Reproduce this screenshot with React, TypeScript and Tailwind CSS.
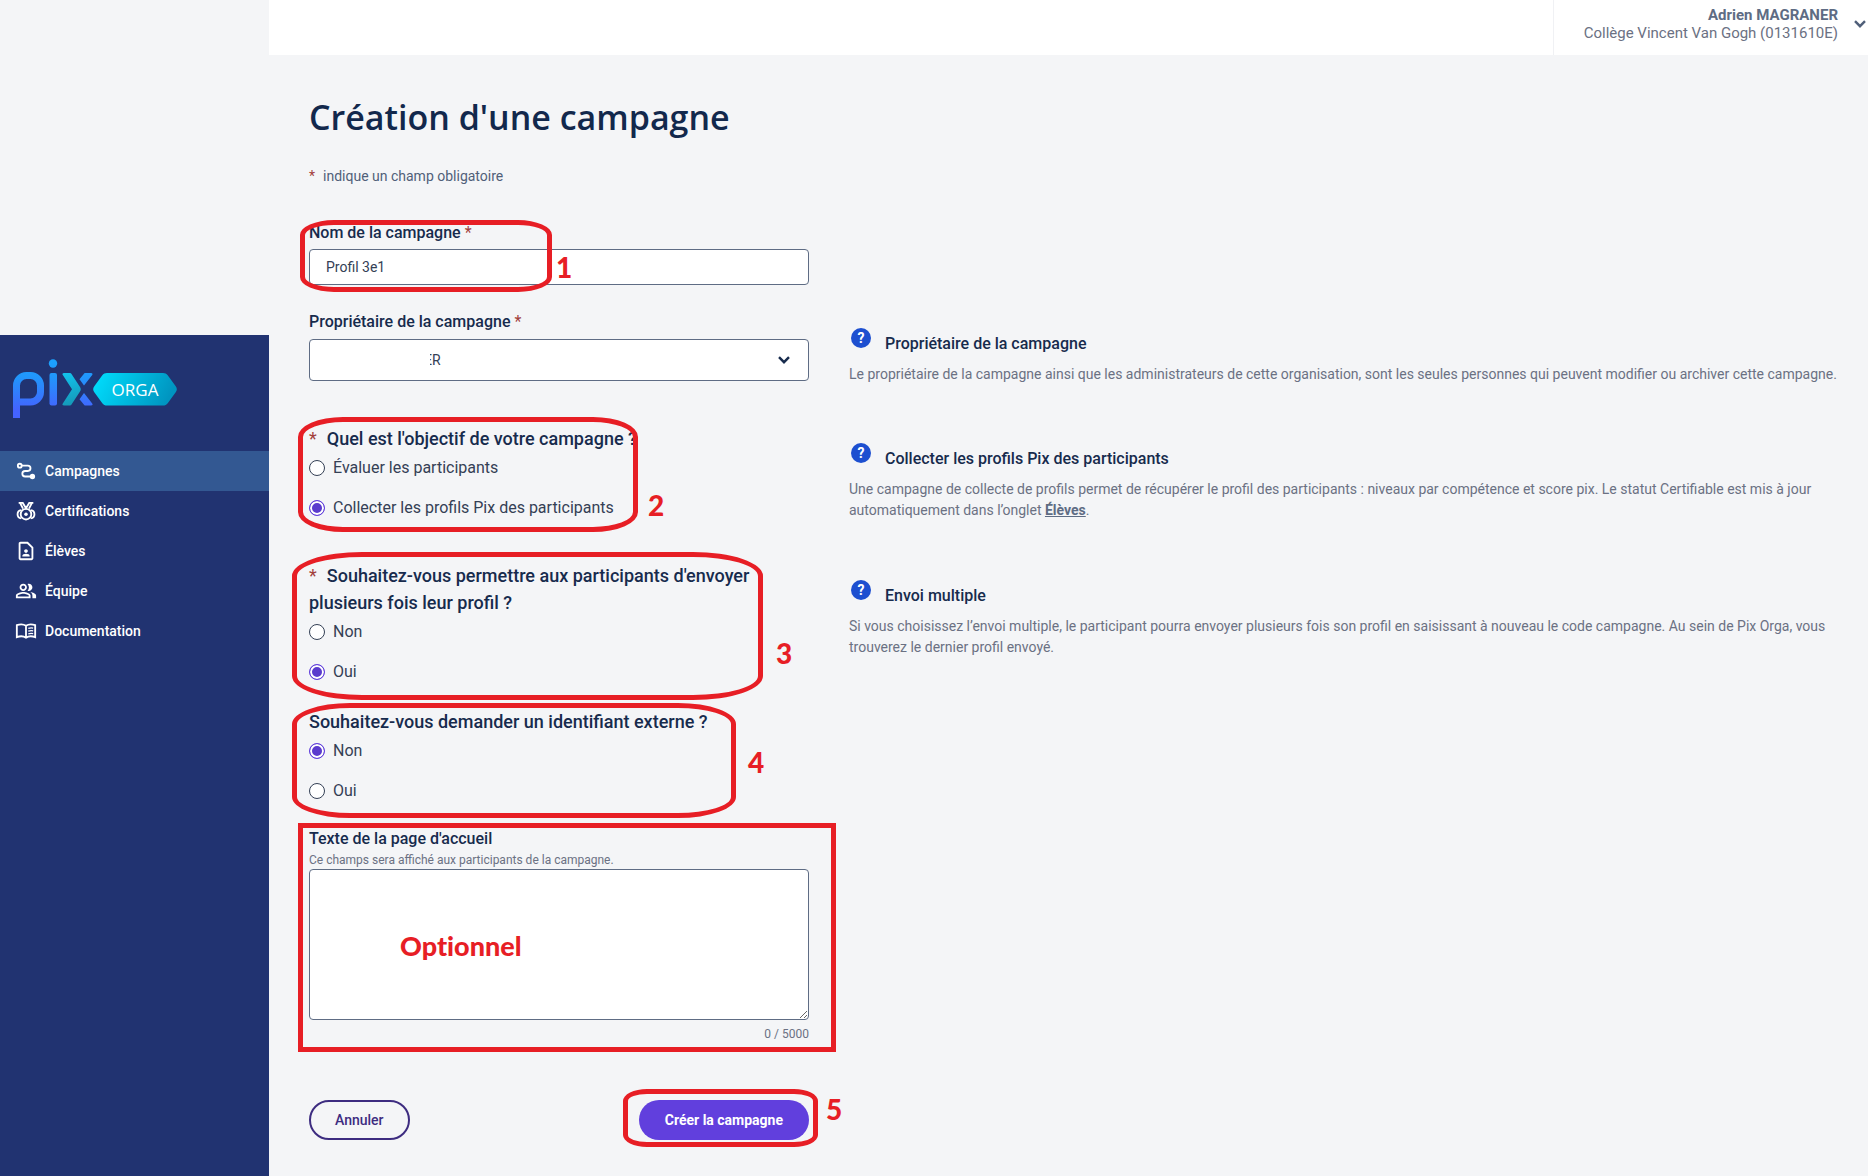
import React, { useState } from "react";
import { MdOutlineContactPage, MdOutlinePeopleAlt } from "react-icons/md";

function RouteIcon() {
  return (
    <svg viewBox="0 0 24 24" className="size-[22px]" fill="none" stroke="currentColor" strokeWidth="2" aria-hidden="true">
      <circle cx="5.2" cy="6.2" r="2.1" />
      <path d="M7.500 6.200H14a2.900 2.900 0 0 1 0 5.800h-3a3 3 0 0 0 0 6h6" />
      <circle cx="19" cy="18" r="2.9" fill="currentColor" stroke="none" />
    </svg>
  );
}

function MedalIcon() {
  return (
    <svg viewBox="0 0 24 24" className="size-[22px]" fill="none" stroke="currentColor" strokeWidth="2" aria-hidden="true">
      <path d="M4 3.200h4.500L12 9l3.500-5.800H20M5.500 3.200L8.700 9.500M18.500 3.200l-3.200 6.300" />
      <circle cx="12" cy="15.500" r="5.800" />
      <path d="M6.800 11C4 11.300 2.800 13 2.800 15.500S4 19.700 6.800 20M17.200 11c2.800.3 4 2 4 4.500s-1.200 4.200-4 4.500" />
      <circle cx="12" cy="15.500" r="1.900" fill="currentColor" stroke="none" />
    </svg>
  );
}

function BookIcon() {
  return (
    <svg viewBox="0 0 24 24" className="size-[22px]" fill="none" stroke="currentColor" strokeWidth="2" aria-hidden="true">
      <path d="M12 6.300C9.500 4.600 5.500 4.400 2 5.700v13c3.500-1.300 7.500-1.100 10 .6 2.500-1.700 6.500-1.900 10-.6v-13c-3.500-1.300-7.500-1.100-10 .6zM12 6.300v13" />
      <path d="M14.500 9.200c1.800-.6 3.600-.7 5.300-.3M14.500 12.200c1.800-.6 3.600-.7 5.300-.3M14.500 15.200c1.800-.6 3.600-.7 5.300-.3" strokeWidth="1.400" />
    </svg>
  );
}

function Logo() {
  return (
    <svg viewBox="0 0 166 60" className="h-[60px] w-[166px]" role="img" aria-label="Pix Orga">
      <defs>
        <linearGradient id="pix" x1="0" y1="0" x2="0" y2="60" gradientUnits="userSpaceOnUse">
          <stop offset="0" stopColor="#1aa3ff" />
          <stop offset="0.3" stopColor="#2196fb" />
          <stop offset="0.85" stopColor="#4463ff" />
        </linearGradient>
        <linearGradient id="chevron" x1="50" y1="14" x2="60" y2="47" gradientUnits="userSpaceOnUse">
          <stop offset="0" stopColor="#12c4ee" />
          <stop offset="1" stopColor="#1597b6" />
        </linearGradient>
        <linearGradient id="badge" x1="80" y1="14" x2="150" y2="50" gradientUnits="userSpaceOnUse">
          <stop offset="0" stopColor="#00e0ff" />
          <stop offset="1" stopColor="#0095c0" />
        </linearGradient>
      </defs>
      <path d="M3.500 59V26.500a10 10 0 0 1 10-10h4a10 10 0 0 1 10 10v6.500a10 10 0 0 1-10 10H3.500" fill="none" stroke="url(#pix)" strokeWidth="7" />
      <circle cx="40" cy="4.500" r="4.200" fill="url(#pix)" />
      <rect x="36.500" y="14" width="7.500" height="32.500" rx="2" fill="url(#pix)" />
      <path d="M72 14h6c1.500 0 2 1 1.200 2L71 26.500l-4.500-6.200 4.300-5.300c.4-.6.700-1 1.200-1zM72 46.500h6c1.500 0 2-1 1.200-2L71 34l-4.500 6.200 4.300 5.300c.4.600.7 1 1.200 1z" fill="url(#pix)" />
      <path d="M51 14h5.500c1 0 1.500.3 2 1L67 28c1 1.500 1 3 0 4.500l-8.500 13c-.5.7-1 1-2 1H51c-1.500 0-2-1-1.200-2L59 30.300 49.800 16c-.8-1-.3-2 1.200-2z" fill="url(#chevron)" />
      <path d="M94 14h56c2 0 3.500.7 4.700 2.300l8 11c1.500 2 1.500 3.900 0 5.900l-8 11c-1.200 1.600-2.700 2.300-4.700 2.300H94c-2 0-3.500-.7-4.700-2.300l-8-11c-1.500-2-1.500-3.900 0-5.900l8-11C90.500 14.700 92 14 94 14z" fill="url(#badge)" />
      <text x="122" y="36.500" textAnchor="middle" className="fill-white font-['Open_Sans'] text-[17px] font-medium">ORGA</text>
    </svg>
  );
}

const navItems = [
  { label: "Campagnes", icon: <RouteIcon />, active: true },
  { label: "Certifications", icon: <MedalIcon />, active: false },
  { label: "Élèves", icon: <MdOutlineContactPage className="size-[22px]" />, active: false },
  { label: "Équipe", icon: <MdOutlinePeopleAlt className="size-[22px]" />, active: false },
  { label: "Documentation", icon: <BookIcon />, active: false },
];

function Chevron({ className }: { className: string }) {
  return (
    <svg viewBox="0 0 12 8" className={className} fill="none" stroke="currentColor" strokeWidth="2.4" aria-hidden="true">
      <path d="M1 1.200l5 5 5-5" />
    </svg>
  );
}

function Mark({ shape, number, numberAt }: { shape: string; number?: string; numberAt?: string }) {
  return (
    <>
      <span className={`pointer-events-none absolute border-[5px] border-[#e71e25] ${shape}`} />
      {number && (
        <span className={`pointer-events-none absolute font-['Lato'] text-[28px] leading-7 font-black text-[#e71e25] ${numberAt}`}>{number}</span>
      )}
    </>
  );
}

function Star() {
  return <span className="font-normal text-[#a2403c]">*</span>;
}

function Help({ title, children }: { title: string; children: React.ReactNode }) {
  return (
    <aside className="pt-4">
      <div className="flex gap-3">
        <span className="flex size-6 shrink-0 items-center justify-center" aria-hidden="true">
          <span className="flex size-5 items-center justify-center rounded-full bg-[#1d4fd0] text-sm font-bold text-white">?</span>
        </span>
        <h2 className="pt-1.5 text-base leading-6 font-medium text-[#172b4d]">{title}</h2>
      </div>
      <p className="mt-2 text-sm leading-[21px] text-[#6b7183]">{children}</p>
    </aside>
  );
}

function Choice({ name, legend, required, options, selected }: { name: string; legend: string; required?: boolean; options: string[]; selected: number }) {
  return (
    <fieldset>
      <legend className="text-lg leading-[27px] font-medium text-[#172b4d]">
        {required && <span className="mr-2.5"><Star /></span>}
        {legend}
      </legend>
      <div className="mt-1 flex flex-col gap-4">
        {options.map((o, i) => (
          <label key={o} className="flex items-center gap-2 text-base leading-6 text-[#344055]">
            <input
              type="radio"
              name={name}
              defaultChecked={i === selected}
              className="size-4 appearance-none rounded-full border border-[#344055] bg-white checked:border-[#613fdd] checked:bg-[#5a3bcd] checked:shadow-[inset_0_0_0_2px_white]"
            />
            {o}
          </label>
        ))}
      </div>
    </fieldset>
  );
}

const row = "relative grid grid-cols-[500px_1fr] gap-x-10";
const fieldLabel = "block text-base leading-6 font-medium text-[#172b4d]";

export default function App() {
  const [text, setText] = useState("");
  return (
    <div className="flex min-h-screen bg-[#f4f5f7] font-['Roboto',sans-serif]">
      <aside className="flex w-[269px] shrink-0 flex-col pt-[335px]">
        <div className="flex-1 bg-[#213371]">
          <div className="h-[116px] pt-6 pl-[13px]">
            <Logo />
          </div>
          <nav>
            {navItems.map((n) => (
              <a key={n.label} href="#" className={`flex h-10 items-center gap-2 pl-[15px] text-sm font-medium text-white ${n.active ? "bg-[#335892]" : ""}`}>
                {n.icon}
                {n.label}
              </a>
            ))}
          </nav>
        </div>
      </aside>

      <div className="flex min-w-0 flex-1 flex-col">
        <header className="flex h-[55px] justify-end bg-white">
          <button type="button" className="flex items-start gap-4 border-l border-[#f0f1f4] pt-1.5 pr-0.5 pl-[30px] text-right text-[15px] leading-[18px] text-[#6b7183]">
            <span>
              <span className="block font-bold text-[#5e6c84]">Adrien MAGRANER</span>
              <span className="block">Collège Vincent Van Gogh (0131610E)</span>
            </span>
            <Chevron className="mt-3.5 w-3 text-[#505f79]" />
          </button>
        </header>

        <main className="px-10 pt-10 pr-7 pb-9">
          <h1 className="font-['Open_Sans'] text-[34px] leading-11 font-semibold text-[#12284c]">Création d'une campagne</h1>
          <p className="mt-[25px] text-sm leading-6 text-[#505f79]">
            <span className="mr-2"><Star /></span>indique un champ obligatoire
          </p>

          <form className="mt-[33px]" onSubmit={(e) => e.preventDefault()}>
            <div className={row}>
              <div>
                <label htmlFor="name" className={fieldLabel}>Nom de la campagne <Star /></label>
                <input id="name" defaultValue="Profil 3e1" className="mt-1 h-9 w-full rounded border border-[#5e6c84] bg-white px-4 text-sm text-[#344055]" />
              </div>
              <Mark shape="-left-[9px] -top-px h-[72px] w-[252px] rounded-[34px/15px]" number="1" numberAt="left-[247px] top-8" />
            </div>

            <div className={`${row} mt-[25px]`}>
              <div>
                <label htmlFor="owner" className={fieldLabel}>Propriétaire de la campagne <Star /></label>
                <div className="relative mt-[5px]">
                  <select id="owner" className="h-[42px] w-full appearance-none rounded border border-[#5e6c84] bg-white pl-[114px] text-sm text-[#344055]">
                    <option>ER</option>
                  </select>
                  <span className="pointer-events-none absolute top-3 left-[110px] h-4 w-[11px] bg-white" />
                  <span className="pointer-events-none absolute top-[17px] right-[19px] text-[#172b4d]"><Chevron className="w-3" /></span>
                </div>
              </div>
              <Help title="Propriétaire de la campagne">
                Le propriétaire de la campagne ainsi que les administrateurs de cette organisation, sont les seules personnes qui peuvent modifier ou archiver cette campagne.
              </Help>
            </div>

            <div className={`${row} mt-10`}>
              <Choice name="goal" required legend="Quel est l'objectif de votre campagne ?" options={["Évaluer les participants", "Collecter les profils Pix des participants"]} selected={1} />
              <Help title="Collecter les profils Pix des participants">
                Une campagne de collecte de profils permet de récupérer le profil des participants : niveaux par compétence et score pix. Le statut Certifiable est mis à jour automatiquement dans l’onglet <a href="#" className="font-bold text-[#5e6c84] underline">Élèves</a>.
              </Help>
              <Mark shape="-left-[11px] -top-2 h-[115px] w-[340px] rounded-[45px/20px]" number="2" numberAt="left-[339px] top-[66px]" />
            </div>

            <div className={`${row} mt-[41px]`}>
              <Choice name="multiple" required legend="Souhaitez-vous permettre aux participants d'envoyer plusieurs fois leur profil ?" options={["Non", "Oui"]} selected={1} />
              <Help title="Envoi multiple">
                Si vous choisissez l’envoi multiple, le participant pourra envoyer plusieurs fois son profil en saisissant à nouveau le code campagne. Au sein de Pix Orga, vous trouverez le dernier profil envoyé.
              </Help>
              <Mark shape="-left-[17px] -top-2.5 h-[148px] w-[471px] rounded-[70px/24px]" number="3" numberAt="left-[467px] top-[77px]" />
            </div>

            <div className={`${row} mt-6`}>
              <Choice name="external" legend="Souhaitez-vous demander un identifiant externe ?" options={["Non", "Oui"]} selected={0} />
              <Mark shape="-left-[17px] -top-[5px] h-[115px] w-[444px] rounded-[58px/21px]" number="4" numberAt="left-[439px] top-10" />
            </div>

            <div className={`${row} mt-6`}>
              <div>
                <label htmlFor="welcome" className={fieldLabel}>Texte de la page d'accueil</label>
                <p id="welcome-hint" className="text-xs leading-[18px] text-[#6b7183]">Ce champs sera affiché aux participants de la campagne.</p>
                <textarea
                  id="welcome"
                  aria-describedby="welcome-hint"
                  maxLength={5000}
                  value={text}
                  onChange={(e) => setText(e.target.value)}
                  className="block h-[151px] w-full resize rounded border border-[#5e6c84] bg-white p-3 text-sm"
                />
                <p className="mt-1.5 text-right text-xs leading-4 text-[#6b7183]">{text.length} / 5000</p>
              </div>
              <Mark shape="-left-[11px] -top-1 h-[229px] w-[538px]" />
              <span className="pointer-events-none absolute top-[101px] left-[91px] font-['Lato'] text-[27px] leading-9 font-black text-[#e71e25] [font-variant-ligatures:none]">Optionnel</span>
            </div>

            <div className={`${row} mt-[58px]`}>
              <div className="flex items-center justify-between">
                <button type="button" className="h-10 rounded-full border-2 border-[#3d2c80] px-6 text-sm font-medium text-[#3d2c80]">Annuler</button>
                <button type="submit" className="h-10 rounded-full bg-[#613fdd] px-[26px] text-sm font-bold text-white">Créer la campagne</button>
              </div>
              <Mark shape="left-[314px] -top-[11px] h-[58px] w-[195px] rounded-[24px/12px]" number="5" numberAt="left-[517px] -top-[5px]" />
            </div>
          </form>
        </main>
      </div>
    </div>
  );
}
